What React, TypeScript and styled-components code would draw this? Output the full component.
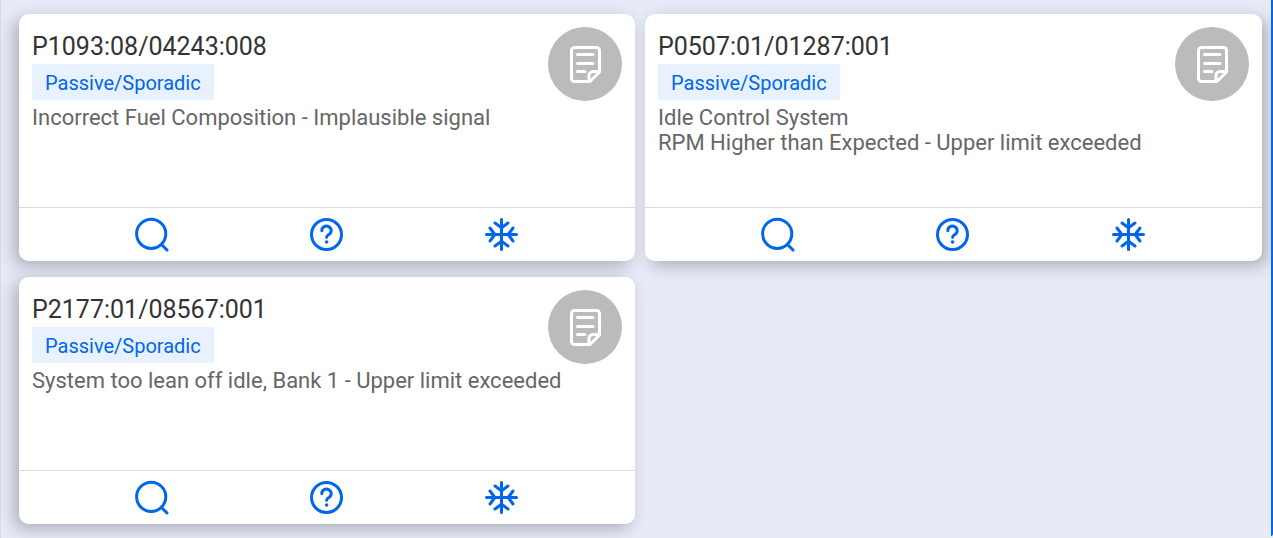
import React from "react";
import styled, { createGlobalStyle } from "styled-components";

const GlobalStyle = createGlobalStyle`
  *, *::before, *::after { box-sizing: border-box; }
  body {
    margin: 0;
    background: #e7ebf7;
    font-family: Roboto, "Liberation Sans", sans-serif;
  }
`;

const Page = styled.main`
  min-height: 100vh;
  padding-bottom: 2px;
  border-left: 1px solid #d9dbe0;
  display: flex;
  isolation: isolate;
`;

const FaultGrid = styled.div`
  flex: 1;
  border-right: 2px solid #0066eb;
  border-bottom-right-radius: 2px;
  padding: 14px 9px 12px 18px;
  display: grid;
  grid-template-columns: minmax(0, 616fr) minmax(0, 617fr);
  align-content: start;
  gap: 16px 10px;
`;

/* The shadow sits on a layer below every card, so it never darkens a neighbour. */
const Card = styled.article`
  position: relative;
  display: flex;
  flex-direction: column;
  background: #fff;
  border-radius: 10px;

  &::before {
    content: "";
    position: absolute;
    inset: 0;
    z-index: -1;
    border-radius: inherit;
    box-shadow: -5px 5px 16px rgba(40, 50, 60, 0.32);
  }

  &:nth-child(even)::before {
    box-shadow: 5px 5px 16px rgba(40, 50, 60, 0.32);
  }
`;

const CardBody = styled.div`
  min-height: 193px;
  padding: 13px;
`;

const CardHeader = styled.header`
  display: flex;
  justify-content: space-between;
`;

const Heading = styled.div`
  display: flex;
  flex-direction: column;
  align-items: flex-start;
`;

const Code = styled.h2`
  margin: 0;
  padding-top: 2px;
  font-size: 25px;
  font-weight: 400;
  line-height: 35px;
  color: #333;
`;

const Status = styled.span`
  padding: 2px 13px 0;
  background: #e8f2ff;
  color: #0066eb;
  font-size: 20px;
  line-height: 34px;
`;

const Description = styled.p`
  margin: 4px 0 0;
  font-size: 22px;
  line-height: 25px;
  color: #666;
  white-space: pre-line;
`;

const IconButton = styled.button`
  display: flex;
  align-items: center;
  justify-content: center;
  padding: 0;
  border: 0;
  background: none;
  color: #0066eb;
  cursor: pointer;
`;

const NoteButton = styled(IconButton)`
  flex: none;
  width: 74px;
  height: 74px;
  border-radius: 50%;
  background: #bbb;
  color: #fff;
`;

const Actions = styled.footer`
  display: grid;
  grid-template-columns: repeat(3, 1fr);
  height: 54px;
  padding: 0 46px 0 45px;
  border-top: 1px solid #dcdcde;
`;

const Stroked = styled.svg`
  display: block;
  fill: none;
  stroke: currentColor;
  stroke-width: 3;
  stroke-linecap: round;
  stroke-linejoin: round;
`;

const NoteIcon = () => (
  <Stroked width="74" height="74" viewBox="0 0 74 74" aria-hidden="true">
    <path d="M41 54.5H26.5a3 3 0 0 1-3-3v-28a3 3 0 0 1 3-3h22a3 3 0 0 1 3 3V45L42 54.500L41 54.500V48.500a4 4 0 0 1 4-4h6.500" />
    <path d="M29.500 27.500h15.500M29.500 36.500h15.500M29.500 44.500h7.500" />
  </Stroked>
);

const SearchIcon = () => (
  <Stroked width="35" height="35" viewBox="0 0 35 35" aria-hidden="true">
    <circle cx="17.200" cy="16.800" r="14.600" />
    <path d="M28 28L33 33" />
  </Stroked>
);

const HelpIcon = () => (
  <Stroked width="35" height="35" viewBox="0 0 35 35" aria-hidden="true">
    <circle cx="17.500" cy="17.500" r="15" />
    <path d="M12.800 13.800a4.700 4.500 0 1 1 7.500 3.400C18.500 18.400 17.600 18.800 17.600 20.300" />
    <circle cx="17.600" cy="25" r="1.800" fill="currentColor" stroke="none" />
  </Stroked>
);

const FreezeIcon = () => (
  <Stroked width="35" height="35" viewBox="0 0 35 35" aria-hidden="true">
    <path d="M17.500 2.500v30M2.500 17.500h30" />
    <path d="M11 6L17.500 10.800L24 6M11 29L17.500 24.200L24 29M6 11L10.800 17.500L6 24M29 11L24.200 17.500L29 24" />
  </Stroked>
);

interface Fault {
  code: string;
  status: string;
  description: string;
}

const faults: Fault[] = [
  {
    code: "P1093:08/04243:008",
    status: "Passive/Sporadic",
    description: "Incorrect Fuel Composition - Implausible signal",
  },
  {
    code: "P0507:01/01287:001",
    status: "Passive/Sporadic",
    description: "Idle Control System\nRPM Higher than Expected - Upper limit exceeded",
  },
  {
    code: "P2177:01/08567:001",
    status: "Passive/Sporadic",
    description: "System too lean off idle, Bank 1 - Upper limit exceeded",
  },
];

const FaultCard = ({ code, status, description }: Fault) => (
  <Card>
    <CardBody>
      <CardHeader>
        <Heading>
          <Code>{code}</Code>
          <Status>{status}</Status>
        </Heading>
        <NoteButton type="button" aria-label="Notes">
          <NoteIcon />
        </NoteButton>
      </CardHeader>
      <Description>{description}</Description>
    </CardBody>
    <Actions>
      <IconButton type="button" aria-label="Search">
        <SearchIcon />
      </IconButton>
      <IconButton type="button" aria-label="Help">
        <HelpIcon />
      </IconButton>
      <IconButton type="button" aria-label="Freeze frame">
        <FreezeIcon />
      </IconButton>
    </Actions>
  </Card>
);

export default function App() {
  return (
    <>
      <GlobalStyle />
      <Page>
        <FaultGrid>
          {faults.map((fault) => (
            <FaultCard key={fault.code} {...fault} />
          ))}
        </FaultGrid>
      </Page>
    </>
  );
}
